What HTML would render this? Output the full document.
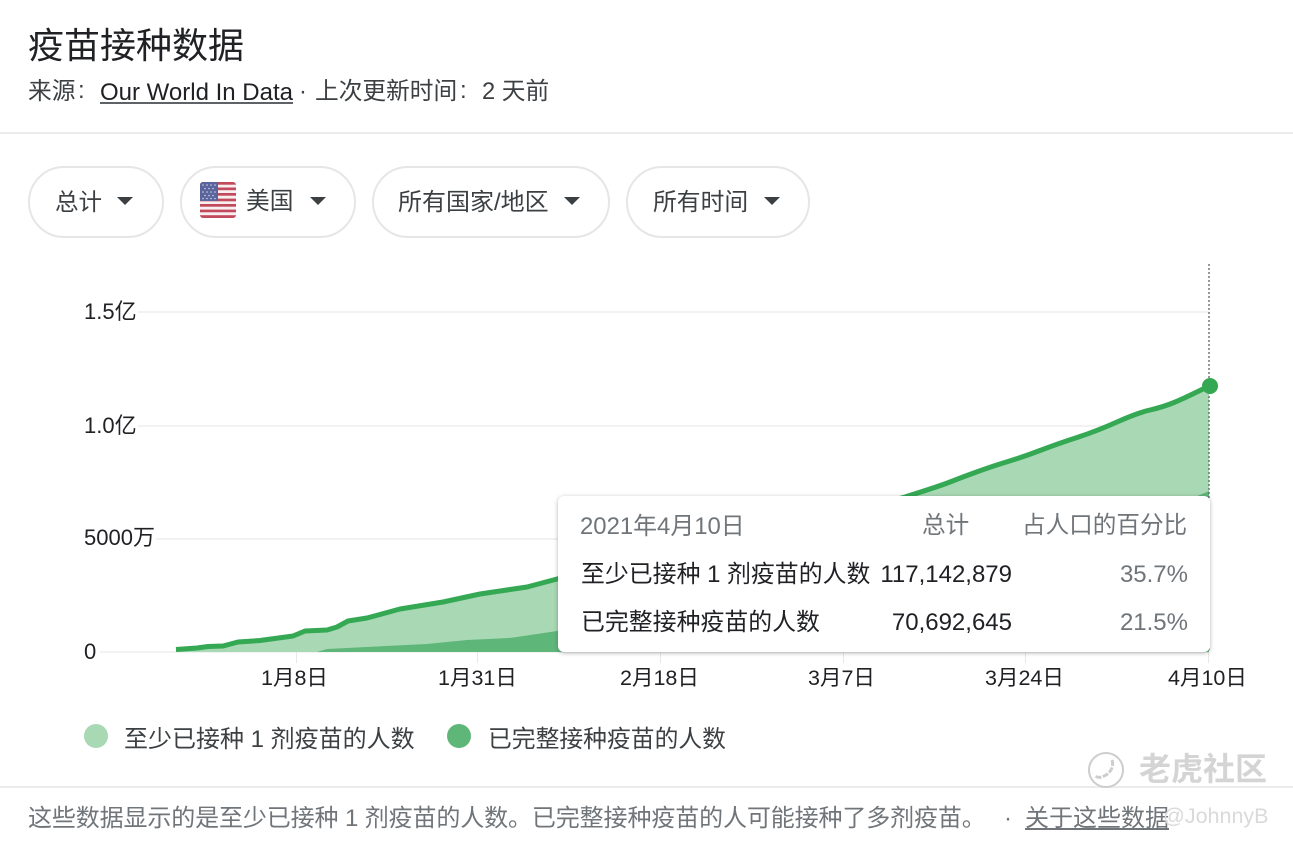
<!DOCTYPE html>
<html lang="zh">
<head>
<meta charset="utf-8">
<style>
html,body{margin:0;padding:0;background:#fff}
body{width:1293px;height:844px;position:relative;overflow:hidden;font-family:"Liberation Sans","Noto Sans CJK SC",sans-serif;color:#3c4043}
.t{position:absolute;white-space:nowrap;line-height:1}
.hr{position:absolute;left:0;width:1293px;height:2px;background:#ebebeb}
.chip{position:absolute;top:166px;height:68px;border:2px solid #e6e6e6;border-radius:36px;box-sizing:content-box}
.arrow{position:absolute;width:0;height:0;border-left:8.5px solid transparent;border-right:8.5px solid transparent;border-top:8.5px solid #3c4043;top:197px}
.g{position:absolute;left:100px;width:1109px;height:2px;background:#f2f2f2}
.tick{position:absolute;top:652px;width:1px;height:11px;background:#e8e8e8}
.ax{font-size:22px;color:#202124}
.xl{font-size:21.5px;color:#202124;top:668px}
.ul{position:absolute;height:2px}
#tip{position:absolute;left:558px;top:496px;width:652px;height:156px;background:#fff;border-radius:6px;box-shadow:0 1px 4px rgba(60,64,67,.4)}
</style>
</head>
<body>
<div class="t" style="left:28px;top:28px;font-size:36px;color:#202124">疫苗接种数据</div>
<div class="t" style="left:28px;top:81px;font-size:23.7px;color:#3c4043">来源</div>
<div class="t" style="left:78px;top:79px;font-size:24px;color:#3c4043">:</div>
<div class="t" style="left:100px;top:81px;font-size:24px;color:#202124">Our World In Data</div>
<div class="ul" style="left:100px;top:102px;width:193px;background:#5f6368"></div>
<div class="t" style="left:299px;top:81px;font-size:23.7px;color:#3c4043">·</div>
<div class="t" style="left:315px;top:81px;font-size:23.7px;color:#3c4043">上次更新时间</div>
<div class="t" style="left:460px;top:79px;font-size:24px;color:#3c4043">:</div>
<div class="t" style="left:482px;top:81px;font-size:23.7px;color:#3c4043">2 天前</div>
<div class="hr" style="top:132px"></div>

<div class="chip" style="left:28px;width:132px"></div>
<div class="t" style="left:55px;top:191px;font-size:23.5px">总计</div>
<div class="arrow" style="left:117px"></div>

<div class="chip" style="left:180px;width:172px"></div>
<svg style="position:absolute;left:200px;top:182px" width="36" height="36" viewBox="0 0 36 36">
<defs><clipPath id="c"><rect x="0" y="0" width="36" height="36" rx="3"/></clipPath></defs>
<g clip-path="url(#c)">
<rect width="36" height="36" fill="#f8f0f0"/>
<g fill="#c14a5c">
<rect y="0" width="36" height="2.7"/><rect y="5.5" width="36" height="2.7"/><rect y="11" width="36" height="2.7"/><rect y="16.6" width="36" height="2.7"/><rect y="22" width="36" height="2.7"/><rect y="27.6" width="36" height="2.7"/><rect y="33.2" width="36" height="2.8"/>
</g>
<rect width="18" height="19" fill="#5b659d"/>
<g fill="#cfd2e6"><circle cx="3" cy="3" r=".8"/><circle cx="7" cy="3" r=".8"/><circle cx="11" cy="3" r=".8"/><circle cx="15" cy="3" r=".8"/><circle cx="5" cy="6.5" r=".8"/><circle cx="9" cy="6.5" r=".8"/><circle cx="13" cy="6.5" r=".8"/><circle cx="3" cy="10" r=".8"/><circle cx="7" cy="10" r=".8"/><circle cx="11" cy="10" r=".8"/><circle cx="15" cy="10" r=".8"/><circle cx="5" cy="13.5" r=".8"/><circle cx="9" cy="13.5" r=".8"/><circle cx="13" cy="13.5" r=".8"/><circle cx="3" cy="16.5" r=".8"/><circle cx="7" cy="16.5" r=".8"/><circle cx="11" cy="16.5" r=".8"/><circle cx="15" cy="16.5" r=".8"/></g>
</g></svg>
<div class="t" style="left:246px;top:191px;font-size:23.7px">美国</div>
<div class="arrow" style="left:310px"></div>

<div class="chip" style="left:372px;width:234px"></div>
<div class="t" style="left:398px;top:191px;font-size:24px">所有国家/地区</div>
<div class="arrow" style="left:564px"></div>

<div class="chip" style="left:626px;width:180px"></div>
<div class="t" style="left:653px;top:191px;font-size:23.8px">所有时间</div>
<div class="arrow" style="left:764px"></div>

<div class="g" style="top:311px"></div>
<div class="g" style="top:425px"></div>
<div class="g" style="top:538px"></div>
<div class="g" style="top:651px"></div>
<div class="t ax" style="left:84px;top:301px;background:#fff;padding-right:1px">1.5亿</div>
<div class="t ax" style="left:84px;top:415px;background:#fff;padding-right:1px">1.0亿</div>
<div class="t ax" style="left:84px;top:527px;background:#fff;padding-right:1px">5000万</div>
<div class="t ax" style="left:84px;top:641px;background:#fff;padding-right:1px">0</div>

<div class="tick" style="left:296px"></div>
<div class="tick" style="left:477px"></div>
<div class="tick" style="left:660px"></div>
<div class="tick" style="left:843px"></div>
<div class="tick" style="left:1025px"></div>
<div class="tick" style="left:1208px"></div>

<svg style="position:absolute;left:0;top:0" width="1293" height="844" viewBox="0 0 1293 844">
<path fill="#a8d8b4" d="M176 652V649.5L197 648L208 646.5L223 646L238 642L260 640.5L293 636L305 631L327 630L337 627L348 621L367 618L400 609L443 602L480 594L527 587L557 579L640 562L780 530L905 497Q940 486 950 482Q960 478 976.5 472Q993 466 1008 461.5Q1023 457 1040 450.5Q1057 444 1077 437.5Q1097 431 1117 422Q1137 413 1150 410Q1163 407 1174 402.5Q1185 398 1209 386V652Z"/>
<path fill="#5fb679" d="M317 652L327 649L427 644L467 640L510 638L537 634L557 631L640 615L780 580L902 540L1100 515L1195 497L1209 491V652Z"/>
<path fill="none" stroke="#34a853" stroke-width="5" stroke-linejoin="round" d="M176 649.5L197 648L208 646.5L223 646L238 642L260 640.5L293 636L305 631L327 630L337 627L348 621L367 618L400 609L443 602L480 594L527 587L557 579L640 562L780 530L905 497Q940 486 950 482Q960 478 976.5 472Q993 466 1008 461.5Q1023 457 1040 450.5Q1057 444 1077 437.5Q1097 431 1117 422Q1137 413 1150 410Q1163 407 1174 402.5Q1185 398 1209 386"/>
<line x1="1209" y1="264" x2="1209" y2="652" stroke="#5f6368" stroke-width="1.3" stroke-dasharray="2 2"/>
<circle cx="1210" cy="386" r="8" fill="#34a853"/>
</svg>

<div id="tip"></div>
<div class="t" style="left:580px;top:515px;font-size:23.9px;color:#70757a">2021年4月10日</div>
<div class="t" style="left:922px;top:515px;font-size:23.6px;color:#70757a">总计</div>
<div class="t" style="left:1022px;top:515px;font-size:23.6px;color:#70757a">占人口的百分比</div>
<div class="t" style="left:581px;top:563px;font-size:23.9px;color:#202124">至少已接种 1 剂疫苗的人数</div>
<div class="t" style="right:281px;top:563px;font-size:24px;color:#202124">117,142,879</div>
<div class="t" style="right:105px;top:563px;font-size:24px;color:#70757a">35.7%</div>
<div class="t" style="left:581px;top:611px;font-size:23.9px;color:#202124">已完整接种疫苗的人数</div>
<div class="t" style="right:281px;top:611px;font-size:24px;color:#202124">70,692,645</div>
<div class="t" style="right:105px;top:611px;font-size:24px;color:#70757a">21.5%</div>

<div class="t xl" style="left:261px">1月8日</div>
<div class="t xl" style="left:438px">1月31日</div>
<div class="t xl" style="left:620px">2月18日</div>
<div class="t xl" style="left:808px">3月7日</div>
<div class="t xl" style="left:985px">3月24日</div>
<div class="t xl" style="left:1168px">4月10日</div>

<div style="position:absolute;left:84px;top:724px;width:24px;height:24px;border-radius:50%;background:#a8d8b4"></div>
<div class="t" style="left:124px;top:728px;font-size:24px;color:#3c4043">至少已接种 1 剂疫苗的人数</div>
<div style="position:absolute;left:447px;top:724px;width:24px;height:24px;border-radius:50%;background:#5fb679"></div>
<div class="t" style="left:488px;top:728px;font-size:23.8px;color:#3c4043">已完整接种疫苗的人数</div>

<div class="hr" style="top:786px"></div>
<div class="t" style="left:28px;top:807px;font-size:24px;letter-spacing:-.12px;color:#70757a">这些数据显示的是至少已接种 1 剂疫苗的人数。已完整接种疫苗的人可能接种了多剂疫苗。</div>
<div class="t" style="left:1004px;top:807px;font-size:24px;color:#70757a">·</div>
<div class="t" style="left:1025px;top:807px;font-size:24px;color:#70757a">关于这些数据</div>
<div class="ul" style="left:1025px;top:828px;width:144px;background:#70757a"></div>

<svg style="position:absolute;left:1086px;top:750px" width="40" height="40" viewBox="0 0 40 40" fill="none" stroke="#cdcdcd" stroke-width="2"><circle cx="20" cy="20" r="17"/><path d="M26 10c2 6-1 12-6 15s-8 3-11 1" stroke-width="3" stroke-dasharray="6 1.5"/></svg>
<div class="t" style="left:1139px;top:753px;font-size:32px;color:#d4d4d4;font-weight:700">老虎社区</div>
<div class="t" style="left:1163px;top:806px;font-size:21.5px;color:#dadada">@JohnnyB</div>
</body>
</html>
